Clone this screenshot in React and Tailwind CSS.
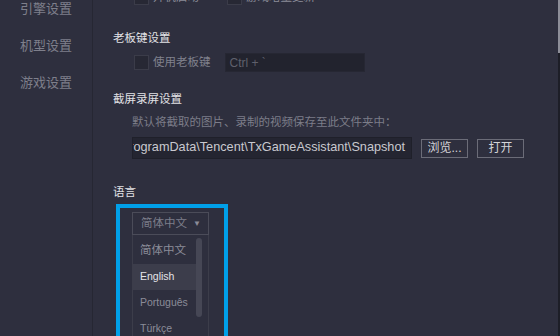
import React from 'react';

const cjk = { fontFamily: '"Liberation Sans", "Noto Sans CJK SC", sans-serif' };

const Checkbox = ({ checked }) => (
  <span className="flex h-[15px] w-[15px] shrink-0 items-center justify-center border border-[#3b3c49] bg-[#272834]">
    {checked && <span className="h-[4px] w-[4px] bg-[#2f7cf6]" />}
  </span>
);

const SideItem = ({ label }) => (
  <div className="flex h-[37px] items-center pl-[20px] text-[13px] text-[#7e7f8b]">{label}</div>
);

const Heading = ({ children, className = '' }) => (
  <div className={`h-[16px] text-[11.5px] leading-[16px] text-[#e2e2e6] ${className}`}>{children}</div>
);

const languages = ['简体中文', 'English', 'Português', 'Türkçe', 'Español'];

const App = () => {
  return (
    <div className="flex h-[336px] w-[560px] overflow-hidden bg-[#2e2f3e]" style={cjk}>
      {/* Sidebar */}
      <div className="w-[93px] shrink-0 border-r border-[#262733]">
        <div className="-mt-[10px]">
          <SideItem label="引擎设置" />
          <SideItem label="机型设置" />
          <SideItem label="游戏设置" />
        </div>
      </div>

      {/* Settings */}
      <div className="flex-1 overflow-hidden pl-[20px]">
        <div className="-mt-[10px]">
          <div className="flex h-[15px] items-center text-[11.5px] text-[#8b8c98]">
            <div className="ml-[21px] flex items-center gap-[4px]">
              <Checkbox />
              <span>开机启动</span>
            </div>
            <div className="ml-[28px] flex items-center gap-[4px]">
              <Checkbox checked />
              <span>游戏增量更新</span>
            </div>
          </div>

          <Heading className="mt-[25px]">老板键设置</Heading>
          <div className="mt-[7px] flex h-[19px] items-center pl-[21px]">
            <Checkbox />
            <span className="ml-[4px] text-[11.5px] text-[#80818d]">使用老板键</span>
            <div className="ml-[14px] flex h-[19px] w-[140px] items-center border border-[#262733] bg-[#22232e] pl-[4px] text-[12px] text-[#5f606c]">
              Ctrl + `
            </div>
          </div>

          <Heading className="mt-[19px]">截屏录屏设置</Heading>
          <div className="mt-[7px] h-[16px] pl-[19px] text-[11.5px] leading-[16px] text-[#7c7d89]">
            默认将截取的图片、录制的视频保存至此文件夹中：
          </div>
          <div className="mt-[7px] flex h-[22px] items-center pl-[19px]">
            <div className="flex h-[22px] w-[280px] items-center justify-end overflow-hidden whitespace-nowrap border border-[#1f202a] bg-[#242531] pr-[6px] text-[12.7px] text-[#c9c9cf]">
              C:\ProgramData\Tencent\TxGameAssistant\Snapshot
            </div>
            <button className="ml-[9px] flex h-[19px] w-[47px] items-center justify-center border border-[#6b6c78] text-[12px] text-[#d4d4d8]">
              浏览...
            </button>
            <button className="ml-[9px] flex h-[19px] w-[47px] items-center justify-center border border-[#6b6c78] text-[12px] text-[#d4d4d8]">
              打开
            </button>
          </div>

          <Heading className="mt-[25px]">语言</Heading>

          {/* Language picker */}
          <div className="ml-[3px] mt-[4px] h-[160px] w-[112px] border-4 border-[#00a0e9] pl-[12px] pt-[4px]">
            <div className="flex h-[23px] w-[77px] items-center justify-between border border-[#4b4c59] pl-[8px] pr-[7px] text-[11.5px] text-[#7d7e8a]">
              <span>简体中文</span>
              <span className="text-[8px] text-[#8b8c98]">▼</span>
            </div>
            <div className="flex w-[77px] border-x border-[#3c3d4a] pt-[3px]">
              <div className="flex-1">
                {languages.map((lang) => (
                  <div
                    key={lang}
                    className={`flex h-[26px] items-center pl-[7px] ${
                      lang === '简体中文' ? 'text-[11.5px]' : 'text-[10.5px]'
                    } ${lang === 'English' ? 'bg-[#3c3d4b] text-[#e4e4e8]' : 'text-[#8b8c98]'}`}
                  >
                    {lang}
                  </div>
                ))}
              </div>
              <div className="mr-[6px] w-[6px]">
                <div className="h-[79px] rounded-full bg-[#464755]" />
              </div>
            </div>
          </div>
        </div>
      </div>

      {/* Scrollbar */}
      <div className="flex w-[2px] shrink-0 flex-col">
        <div className="h-[53px] bg-[#8d8e98]" />
        <div className="flex-1 bg-[#1d1e27]" />
      </div>
    </div>
  );
};

export default App;
